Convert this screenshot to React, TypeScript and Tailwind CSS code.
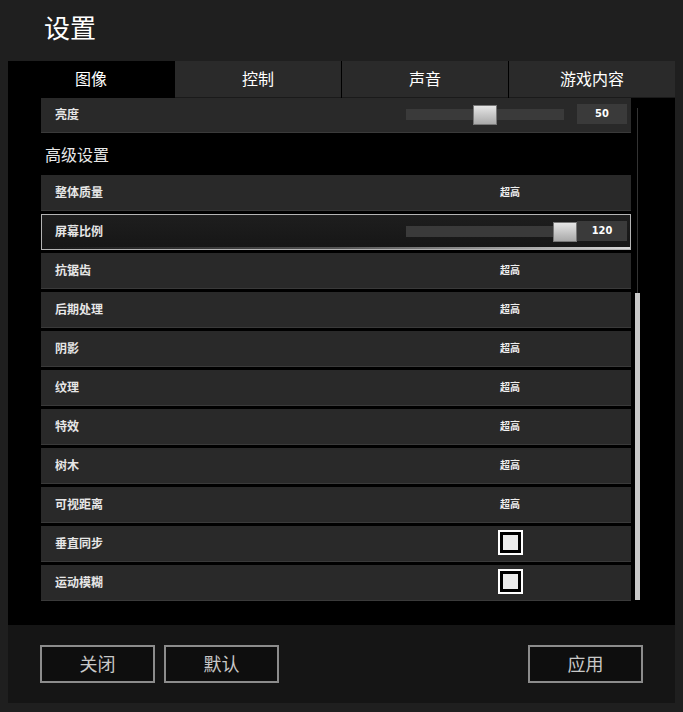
import React from "react"

const cjk = { fontFamily: '"Noto Sans CJK SC", "Noto Sans", sans-serif' }
const num = { fontFamily: '"DejaVu Sans Condensed", "Liberation Sans", sans-serif' }

type Row = {
  label: string
  kind: "text" | "slider" | "check"
  value?: string
  thumb?: number
  selected?: boolean
}

const rows: Row[] = [
  { label: "整体质量", kind: "text", value: "超高" },
  { label: "屏幕比例", kind: "slider", value: "120", thumb: 147, selected: true },
  { label: "抗锯齿", kind: "text", value: "超高" },
  { label: "后期处理", kind: "text", value: "超高" },
  { label: "阴影", kind: "text", value: "超高" },
  { label: "纹理", kind: "text", value: "超高" },
  { label: "特效", kind: "text", value: "超高" },
  { label: "树木", kind: "text", value: "超高" },
  { label: "可视距离", kind: "text", value: "超高" },
  { label: "垂直同步", kind: "check" },
  { label: "运动模糊", kind: "check" },
]

const tabs = ["图像", "控制", "声音", "游戏内容"]

function Slider({ thumb, value }: { thumb: number; value: string }) {
  return (
    <div className="flex items-center">
      <div className="relative w-[158px] h-[11px] bg-[#3a3a3a]">
        <div
          className="absolute top-[-4px] w-[24px] h-[20px] bg-gradient-to-b from-[#e6e6e6] to-[#a9a9a9] border border-[#777]"
          style={{ left: thumb }}
        />
      </div>
      <div
        className="ml-[13px] w-[50px] h-[20px] bg-[#3a3a3a] flex items-center justify-center text-[11px] font-semibold text-white"
        style={num}
      >
        {value}
      </div>
    </div>
  )
}

function SettingRow({ row }: { row: Row }) {
  return (
    <div
      className={
        row.selected
          ? "relative h-[36px] flex items-center pb-[2px] border border-[#b4b4b4] bg-gradient-to-b from-[#1e1e1e] to-[#161616]"
          : "h-[36px] flex items-center pb-[2px] bg-[#292929] border-b border-[#3a3a3a]"
      }
    >
      <div className={row.selected ? "w-[364px] pl-[13px] text-[12px] font-semibold text-[#e6e6e6]" : "w-[365px] pl-[14px] text-[12px] font-semibold text-[#e6e6e6]"}>
        {row.label}
      </div>
      {row.kind === "text" && (
        <div className="w-[208px] text-center text-[10px] font-semibold text-[#f0f0f0]">{row.value}</div>
      )}
      {row.kind === "slider" && <Slider thumb={row.thumb ?? 0} value={row.value ?? ""} />}
      {row.kind === "check" && (
        <div className="w-[208px] flex justify-center">
          <div className="w-[25px] h-[25px] border-2 border-white bg-black p-[3px]">
            <div className="w-full h-full bg-[#ececec]" />
          </div>
        </div>
      )}
      {row.selected && (
        <div className="absolute left-0 right-0 bottom-0 h-[2px] bg-gradient-to-r from-transparent via-[#555] to-[#d8d8d8]" />
      )}
    </div>
  )
}

function FooterButton({ label }: { label: string }) {
  return (
    <button className="w-[115px] h-[38px] border-2 border-[#8c8c8c] bg-[#0e0e0e] text-[18px] text-[#c8c8c8] flex items-center justify-center pb-[2px]">
      {label}
    </button>
  )
}

export default function App() {
  return (
    <div className="w-[683px] h-[712px] bg-[#1f1f1f] overflow-hidden flex flex-col" style={cjk}>
      {/* Title */}
      <div className="h-[61px] pl-[44px] pt-[9px] text-[26px] leading-[36px] text-white">设置</div>

      {/* Panel */}
      <div className="mx-[8px] w-[667px] bg-black flex flex-col">
        <div className="flex gap-px h-[37px]">
          {tabs.map((t, i) => (
            <div
              key={t}
              className={
                i === 0
                  ? "flex-1 bg-black flex items-center justify-center pb-[3px] text-[16px] text-white"
                  : "flex-1 bg-[#2a2a2a] border-b border-[#1a1a1a] flex items-center justify-center pb-[3px] text-[16px] text-white"
              }
            >
              {t}
            </div>
          ))}
        </div>

        <div className="h-[527px] flex">
          <div className="pl-[33px] w-[623px] flex flex-col">
            <div className="h-[35px] flex items-center pb-[2px] bg-[#292929] border-b border-[#3a3a3a]">
              <div className="w-[365px] pl-[14px] text-[12px] font-semibold text-[#e6e6e6]">亮度</div>
              <Slider thumb={67} value="50" />
            </div>
            <div className="h-[42px] pl-[4px] flex items-center text-[16px] text-[#e8e8e8]">高级设置</div>
            <div className="flex flex-col gap-[3px]">
              {rows.map((r) => (
                <SettingRow key={r.label} row={r} />
              ))}
            </div>
          </div>
          <div className="ml-[3px] w-[6px] pt-[10px] flex flex-col items-center">
            <div className="h-[185px] w-px bg-[#333]" />
            <div className="h-[307px] w-[5px] bg-[#c8c8c8]" />
          </div>
        </div>
      </div>

      {/* Footer */}
      <div className="mx-[8px] w-[667px] h-[78px] bg-[#151515] flex items-start pt-[20px] px-[32px]">
        <div className="flex gap-[9px]">
          <FooterButton label="关闭" />
          <FooterButton label="默认" />
        </div>
        <div className="flex-1" />
        <FooterButton label="应用" />
      </div>
    </div>
  )
}
